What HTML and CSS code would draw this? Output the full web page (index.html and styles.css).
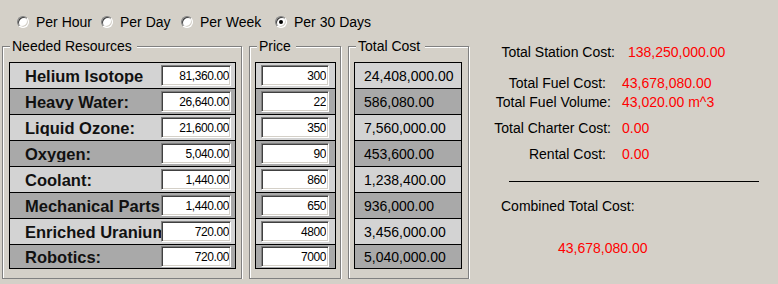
FILE: index.html
```html
<!DOCTYPE html>
<html lang="en">
<head>
  <meta charset="UTF-8">
  <meta name="viewport" content="width=device-width, initial-scale=1.0">
  <title>Fuel Calculator</title>
  <link rel="stylesheet" href="styles.css">
</head>
<body>
  <div class="periods">
    <label class="radio"><span class="dot"></span>Per Hour</label>
    <label class="radio"><span class="dot"></span>Per Day</label>
    <label class="radio"><span class="dot"></span>Per Week</label>
    <label class="radio"><span class="dot checked"></span>Per 30 Days</label>
  </div>

  <div class="main">
    <fieldset class="group group-resources">
      <legend>Needed Resources</legend>
      <div class="panel">
        <div class="row"><span class="name">Helium Isotope</span><input class="field field-amount" type="text" value="81,360.00"></div>
        <div class="row"><span class="name">Heavy Water:</span><input class="field field-amount" type="text" value="26,640.00"></div>
        <div class="row"><span class="name">Liquid Ozone:</span><input class="field field-amount" type="text" value="21,600.00"></div>
        <div class="row"><span class="name">Oxygen:</span><input class="field field-amount" type="text" value="5,040.00"></div>
        <div class="row"><span class="name">Coolant:</span><input class="field field-amount" type="text" value="1,440.00"></div>
        <div class="row"><span class="name">Mechanical Parts</span><input class="field field-amount" type="text" value="1,440.00"></div>
        <div class="row"><span class="name">Enriched Uranium</span><input class="field field-amount" type="text" value="720.00"></div>
        <div class="row"><span class="name">Robotics:</span><input class="field field-amount" type="text" value="720.00"></div>
      </div>
    </fieldset>

    <fieldset class="group group-price">
      <legend>Price</legend>
      <div class="panel">
        <div class="row"><input class="field field-price" type="text" value="300"></div>
        <div class="row"><input class="field field-price" type="text" value="22"></div>
        <div class="row"><input class="field field-price" type="text" value="350"></div>
        <div class="row"><input class="field field-price" type="text" value="90"></div>
        <div class="row"><input class="field field-price" type="text" value="860"></div>
        <div class="row"><input class="field field-price" type="text" value="650"></div>
        <div class="row"><input class="field field-price" type="text" value="4800"></div>
        <div class="row"><input class="field field-price" type="text" value="7000"></div>
      </div>
    </fieldset>

    <fieldset class="group group-total">
      <legend>Total Cost</legend>
      <div class="panel">
        <div class="row"><span class="cost">24,408,000.00</span></div>
        <div class="row"><span class="cost">586,080.00</span></div>
        <div class="row"><span class="cost">7,560,000.00</span></div>
        <div class="row"><span class="cost">453,600.00</span></div>
        <div class="row"><span class="cost">1,238,400.00</span></div>
        <div class="row"><span class="cost">936,000.00</span></div>
        <div class="row"><span class="cost">3,456,000.00</span></div>
        <div class="row"><span class="cost">5,040,000.00</span></div>
      </div>
    </fieldset>

    <div class="summary">
      <div class="stat stat-station"><span class="label">Total Station Cost:</span><span class="value">138,250,000.00</span></div>
      <div class="stat stat-fuel"><span class="label tight">Total Fuel Cost:</span><span class="value">43,678,080.00</span></div>
      <div class="stat stat-volume"><span class="label">Total Fuel Volume:</span><span class="value">43,020.00 m^3</span></div>
      <div class="stat stat-charter"><span class="label">Total Charter Cost:</span><span class="value">0.00</span></div>
      <div class="stat stat-rental"><span class="label tight">Rental Cost:</span><span class="value">0.00</span></div>
      <div class="rule"></div>
      <div class="combined-label">Combined Total Cost:</div>
      <div class="combined-value">43,678,080.00</div>
    </div>
  </div>
</body>
</html>
```

FILE: styles.css
```css
body {
  margin: 0;
  background: #d4d0c8;
  color: #000;
  font-family: 'Liberation Sans', Arial, sans-serif;
  font-size: 14px;
  line-height: 16px;
}

/* period radio buttons */
.periods {
  display: grid;
  grid-template-columns: 84px 80px 94px auto;
  margin-top: 14px;
  padding-left: 17px;
  height: 16px;
}
.radio {
  display: flex;
  align-items: center;
  gap: 7px;
  white-space: nowrap;
}
.dot {
  position: relative;
  box-sizing: border-box;
  width: 12px;
  height: 12px;
  border-radius: 50%;
  background: #fff;
  border: 1px solid;
  border-color: #808080 #fff #fff #808080;
  box-shadow: inset 1px 1px 0 #404040, inset -1px -1px 0 #d4d0c8;
}
.dot.checked::after {
  content: '';
  position: absolute;
  left: 3px;
  top: 3px;
  width: 4px;
  height: 4px;
  border-radius: 50%;
  background: #000;
}

/* group boxes */
.main {
  display: flex;
  align-items: flex-start;
  gap: 7px;
  margin-top: 8px;
  padding-left: 2px;
}
.group {
  box-sizing: border-box;
  margin: 0;
  min-width: 0;
  padding: 8px 5px 9px 5px;
  border: 1px solid #808080;
  box-shadow: inset 1px 1px 0 #fff, 1px 1px 0 #fff;
}
.group legend {
  margin-left: 2px;
  padding: 0 5px 0 2px;
  line-height: 16px;
  background: #d4d0c8;
}
.group-resources {
  width: 240px;
  padding-left: 6px;
}
.group-resources legend {
  margin-left: 1px;
}
.group-price {
  width: 92px;
  padding-right: 4px;
}
.group-total {
  width: 121px;
  padding-right: 6px;
}

.panel {
  border: 1px solid #000;
}
.row {
  display: flex;
  align-items: center;
  height: 25px;
  background: #d3d3d3;
  border-top: 1px solid #000;
}
.row:first-child {
  border-top: none;
}
.row:nth-child(even) {
  background: #a9a9a9;
}
.row:last-child {
  height: 23px;
}

.name {
  flex: 1;
  min-width: 0;
  padding-left: 15px;
  overflow: hidden;
  white-space: nowrap;
  font-size: 16.5px;
  font-weight: bold;
  color: #111;
}
.field {
  box-sizing: border-box;
  height: 21px;
  margin: 0;
  padding: 0 1px 0 0;
  border: 1px solid;
  border-color: #808080 #fff #fff #808080;
  box-shadow: inset 1px 1px 0 #404040, inset -1px -1px 0 #d4d0c8;
  background: #fff;
  text-align: right;
  font-family: 'Liberation Sans', Arial, sans-serif;
  font-size: 12px;
  letter-spacing: -0.4px;
  color: #000;
}
.field-amount {
  width: 70px;
  margin-right: 4px;
}
.field-price {
  width: 68px;
  margin-left: 5px;
  padding-right: 2px;
}
.cost {
  padding-left: 9px;
  white-space: nowrap;
}

/* totals on the right */
.summary {
  display: flex;
  flex-direction: column;
  margin-left: 2px;
  padding-top: 6px;
}
.stat {
  display: grid;
  grid-template-columns: 133px auto;
  column-gap: 11px;
  white-space: nowrap;
}
.stat .label {
  text-align: right;
}
.stat .label.tight {
  padding-right: 5px;
}
.stat .value {
  color: #f00;
}
.stat-station {
  grid-template-columns: 137px auto;
  column-gap: 13px;
}
.stat-fuel {
  margin-top: 15px;
}
.stat-volume {
  margin-top: 3px;
}
.stat-charter,
.stat-rental {
  margin-top: 10px;
}
.rule {
  width: 250px;
  height: 1px;
  margin: 19px 0 0 31px;
  background: #000;
}
.combined-label {
  margin: 16px 0 0 23px;
}
.combined-value {
  margin: 26px 0 0 80px;
  color: #f00;
}
```
